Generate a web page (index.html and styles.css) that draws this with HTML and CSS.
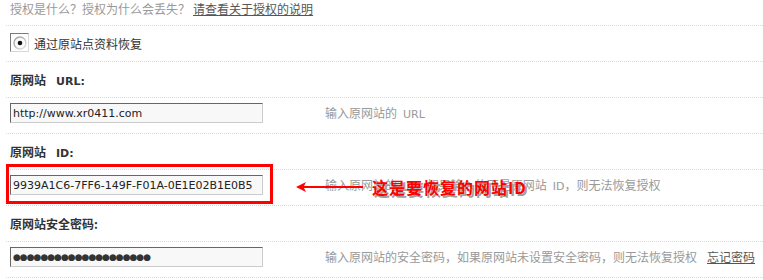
FILE: index.html
```html
<!DOCTYPE html>
<html lang="zh-CN">
<head>
<meta charset="utf-8">
<title>授权恢复</title>
<link rel="stylesheet" href="styles.css">
</head>
<body>
<div class="form">
  <div class="row intro">
    <span class="muted">授权是什么？授权为什么会丢失？</span><a class="link" href="#">请查看关于授权的说明</a>
  </div>
  <div class="row option">
    <span class="radiobox">
      <svg width="14" height="14" viewBox="0 0 14 14">
        <defs>
          <linearGradient id="rg" x1="0" y1="0" x2="1" y2="1">
            <stop offset="0" stop-color="#9a9a9a"/>
            <stop offset="1" stop-color="#e6e6e6"/>
          </linearGradient>
        </defs>
        <circle cx="7" cy="7" r="6" fill="#fafafa" stroke="url(#rg)" stroke-width="1.4"/>
        <circle cx="7" cy="7" r="2.3" fill="#111"/>
      </svg>
    </span>
    <span class="opt">通过原站点资料恢复</span>
  </div>
  <div class="row label"><b>原网站<span class="lat">URL:</span></b></div>
  <div class="row field">
    <input class="inp" type="text" value="http://www.xr0411.com">
    <span class="hint">输入原网站的<span class="lat">URL</span></span>
  </div>
  <div class="row label"><b>原网站<span class="lat">ID:</span></b></div>
  <div class="row field">
    <input class="inp" type="text" value="9939A1C6-7FF6-149F-F01A-0E1E02B1E0B5">
    <span class="hint">输入原网站的<span class="lat">ID</span>，如果输入的不是原网站<span class="lat">ID</span>，则无法恢复授权</span>
  </div>
  <div class="row label"><b>原网站安全密码:</b></div>
  <div class="row field">
    <input class="inp pwd" type="text" value="●●●●●●●●●●●●●●●●●●●●">
    <span class="hint">输入原网站的安全密码，如果原网站未设置安全密码，则无法恢复授权</span>
    <a class="link forgot" href="#">忘记密码</a>
  </div>

  <div class="mark-box"></div>
  <svg class="mark-arrow" width="68" height="12" viewBox="0 0 68 12">
    <polygon points="0,6 10,1 8,5 67,5 67,7 8,7 10,11" fill="#ff0000"/>
  </svg>
  <div class="mark-text">这是要恢复的网站ID</div>
</div>
</body>
</html>
```
FILE: styles.css
```css
html, body {
  margin: 0;
  padding: 0;
  background: #ffffff;
}
body {
  font-family: "Noto Sans CJK SC", "DejaVu Sans", sans-serif;
  font-size: 12px;
  color: #333333;
}
.form {
  position: relative;
  margin-left: 6px;
}
.row {
  display: flex;
  align-items: center;
  height: 35px;
  padding-left: 4px;
  border-bottom: 1px dotted #c4def2;
  box-sizing: content-box;
}
.intro {
  height: 25px;
  align-items: flex-start;
  padding-top: 0;
  line-height: 18px;
}
.muted {
  color: #999999;
}
.link {
  color: #555555;
  text-decoration: underline;
  margin-left: 3px;
}
.option {
  gap: 5px;
}
.radiobox {
  display: inline-flex;
  align-items: center;
  justify-content: center;
  width: 17px;
  height: 17px;
  border-top: 1px solid #7a7a7a;
  border-left: 1px solid #7a7a7a;
  border-right: 1px solid #d8d8d8;
  border-bottom: 1px solid #d8d8d8;
  background: #ffffff;
  margin-top: -2px;
}
.opt {
  color: #333333;
}
.label b {
  font-weight: bold;
  color: #333333;
}
.lat {
  font-family: "DejaVu Sans", sans-serif;
  font-size: 11px;
  margin-left: 6px;
}
.label .lat {
  margin-left: 10px;
  font-weight: bold;
}
.field {
  align-items: flex-start;
  padding-top: 0;
}
.inp {
  box-sizing: border-box;
  width: 253px;
  height: 20px;
  margin: 5px 0 0 0;
  padding: 0 2px;
  border-top: 1px solid #666666;
  border-left: 1px solid #666666;
  border-right: 1px solid #cccccc;
  border-bottom: 1px solid #cccccc;
  background: #f8f8f8;
  font-family: "DejaVu Sans", sans-serif;
  font-size: 11px;
  color: #222222;
  outline: none;
}
.pwd {
  font-size: 9px;
  letter-spacing: -1px;
  color: #333333;
}
.hint {
  margin-left: 62px;
  margin-top: 5px;
  line-height: 20px;
  color: #999999;
  white-space: nowrap;
}
.hint .lat {
  margin-left: 6px;
  margin-right: 0;
}
.forgot {
  margin-left: 10px;
  margin-top: 5px;
  line-height: 20px;
}
.mark-box {
  position: absolute;
  left: 0;
  top: 164px;
  width: 267px;
  height: 40px;
  box-sizing: border-box;
  border: 3px solid #ff0000;
}
.mark-arrow {
  position: absolute;
  left: 290px;
  top: 181px;
}
.mark-text {
  position: absolute;
  left: 366px;
  top: 176px;
  line-height: 22px;
  font-size: 16px;
  font-weight: bold;
  letter-spacing: 1px;
  color: #ff0000;
  text-shadow: 2px 2px 0 #a0a0a0;
  white-space: nowrap;
}
```
